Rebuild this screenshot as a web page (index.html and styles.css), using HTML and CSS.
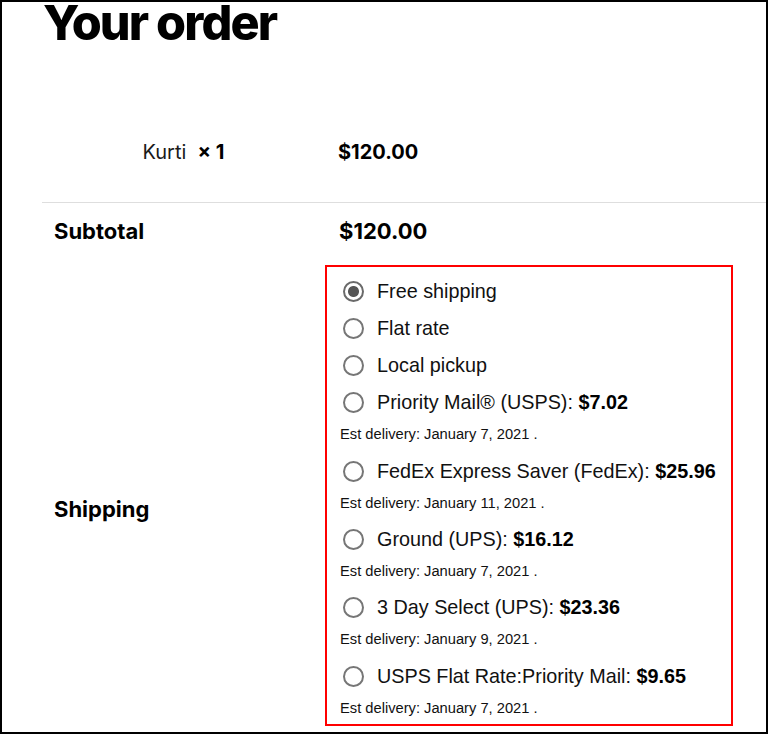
FILE: index.html
```html
<!DOCTYPE html>
<html lang="en">
<head>
<meta charset="utf-8">
<title>Your order</title>
<link rel="stylesheet" href="styles.css">
</head>
<body>
<div class="frame">
  <h1 class="title">Your order</h1>
  <div class="order-table">
    <div class="row row-item">
      <div class="cell product">Kurti&nbsp; <strong class="qty">×&nbsp;1</strong></div>
      <div class="cell value">$120.00</div>
    </div>
    <div class="row row-subtotal">
      <div class="cell label">Subtotal</div>
      <div class="cell value">$120.00</div>
    </div>
    <div class="row row-shipping">
      <div class="cell label ship-label">Shipping</div>
      <div class="cell">
        <ul class="methods">
          <li class="method">
            <label class="opt"><input class="radio" type="radio" name="ship" checked><span>Free shipping</span></label>
          </li>
          <li class="method">
            <label class="opt"><input class="radio" type="radio" name="ship"><span>Flat rate</span></label>
          </li>
          <li class="method">
            <label class="opt"><input class="radio" type="radio" name="ship"><span>Local pickup</span></label>
          </li>
          <li class="method">
            <label class="opt"><input class="radio" type="radio" name="ship"><span>Priority Mail® (USPS): <b>$7.02</b></span></label>
            <p class="est">Est delivery: January 7, 2021 .</p>
          </li>
          <li class="method">
            <label class="opt"><input class="radio" type="radio" name="ship"><span>FedEx Express Saver (FedEx): <b>$25.96</b></span></label>
            <p class="est">Est delivery: January 11, 2021 .</p>
          </li>
          <li class="method">
            <label class="opt"><input class="radio" type="radio" name="ship"><span>Ground (UPS): <b>$16.12</b></span></label>
            <p class="est">Est delivery: January 7, 2021 .</p>
          </li>
          <li class="method">
            <label class="opt"><input class="radio" type="radio" name="ship"><span>3 Day Select (UPS): <b>$23.36</b></span></label>
            <p class="est">Est delivery: January 9, 2021 .</p>
          </li>
          <li class="method">
            <label class="opt"><input class="radio" type="radio" name="ship"><span>USPS Flat Rate:Priority Mail: <b>$9.65</b></span></label>
            <p class="est">Est delivery: January 7, 2021 .</p>
          </li>
        </ul>
      </div>
    </div>
  </div>
</div>
</body>
</html>
```
FILE: styles.css
```css
html, body {
  margin: 0;
  padding: 0;
  background: #fff;
}

.frame {
  box-sizing: border-box;
  width: 768px;
  height: 734px;
  border: 2px solid #000;
  overflow: hidden;
  font-family: Inter, "Liberation Sans", sans-serif;
  color: #000;
}

.title {
  margin: 0;
  padding-left: 41px;
  font-family: Inter, "Liberation Sans", sans-serif;
  font-size: 48.5px;
  font-weight: 800;
  letter-spacing: -0.038em;
  line-height: 41px;
  color: #000;
}

.order-table {
  margin-left: 40px;
}

.row {
  display: grid;
  grid-template-columns: 283px 1fr;
}

.row-item {
  padding: 96.2px 0 36.8px;
  border-bottom: 1px solid #dedede;
  font-size: 20px;
  line-height: 26px;
}

.product {
  text-align: center;
  color: #1a1a1a;
}

.qty {
  font-weight: 700;
  color: #000;
}

.value {
  font-weight: 700;
  padding-left: 13px;
}

.row-subtotal {
  padding: 13px 0 9px;
  font-size: 22px;
  line-height: 30px;
}

.row-subtotal .value {
  padding-left: 14px;
}

.label {
  font-weight: 700;
  padding-left: 12px;
}

.row-shipping {
  padding-top: 10px;
  font-size: 22px;
  line-height: 30px;
  align-items: start;
}

.ship-label {
  padding-top: 229px;
}

.methods {
  box-sizing: border-box;
  width: 408px;
  height: 461px;
  margin: 0;
  padding: 6.5px 0 0 16px;
  list-style: none;
  border: 2px solid #f00;
  font-family: "Liberation Sans", Arial, sans-serif;
  color: #111;
}

.method {
  margin: 0;
  padding: 0;
}

.opt {
  display: flex;
  align-items: center;
  height: 37px;
  font-size: 19.8px;
  line-height: 37px;
  white-space: nowrap;
}

.opt b {
  font-weight: 700;
  color: #000;
}

.radio {
  appearance: none;
  -webkit-appearance: none;
  box-sizing: border-box;
  width: 21px;
  height: 21px;
  margin: 0 13px 0 0;
  border: 2px solid #767676;
  border-radius: 50%;
  background: #fff;
  flex: none;
}

.radio:checked {
  border-color: #6a6a6a;
  background: radial-gradient(circle, #555 0, #555 5px, #fff 6px);
}

.est {
  margin: 0 0 4.3px -3px;
  font-size: 14.7px;
  line-height: 27px;
  color: #111;
  white-space: nowrap;
}
```
